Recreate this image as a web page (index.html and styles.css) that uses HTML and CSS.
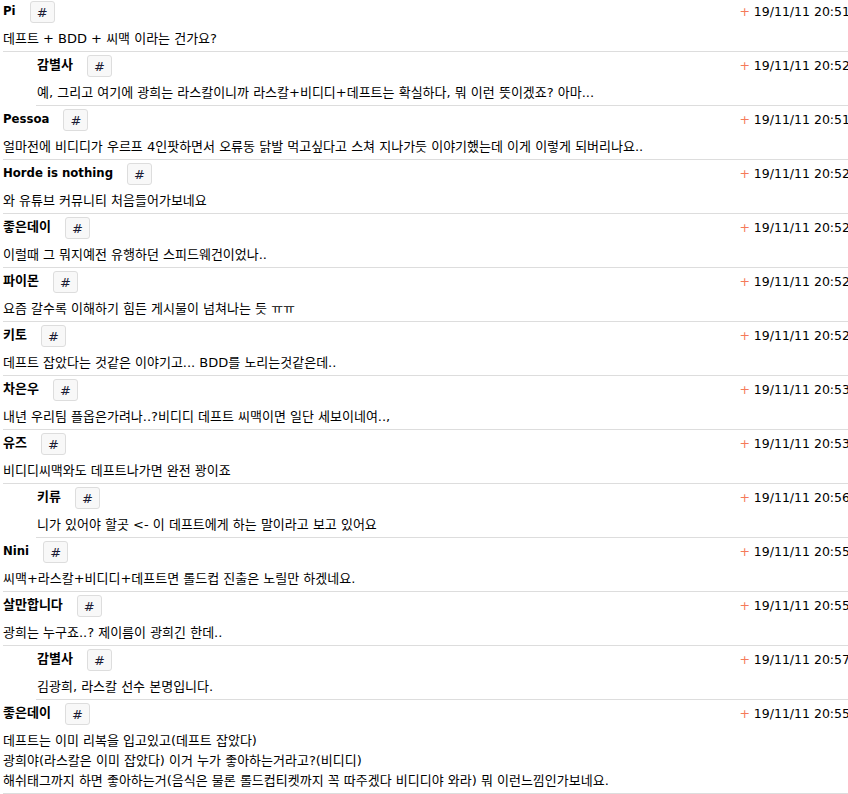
FILE: index.html
```html
<!DOCTYPE html>
<html lang="ko">
<head>
    <meta charset="UTF-8">
    <meta name="viewport" content="width=device-width, initial-scale=1.0">
    <title>댓글</title>
    <link rel="stylesheet" href="styles.css">
</head>
<body>
    <div class="comments">
        <div class="comment">
            <div class="head"><span class="name">Pi</span><button class="anchor">#</button><span class="date"><b>+</b> 19/11/11 20:51</span></div>
            <div class="text">데프트 + BDD + 씨맥 이라는 건가요?</div>
        </div>
        <div class="comment reply">
            <div class="head"><span class="name">감별사</span><button class="anchor">#</button><span class="date"><b>+</b> 19/11/11 20:52</span></div>
            <div class="text">예, 그리고 여기에 광희는 라스칼이니까 라스칼+비디디+데프트는 확실하다, 뭐 이런 뜻이겠죠? 아마...</div>
        </div>
        <div class="comment">
            <div class="head"><span class="name">Pessoa</span><button class="anchor">#</button><span class="date"><b>+</b> 19/11/11 20:51</span></div>
            <div class="text">얼마전에 비디디가 우르프 4인팟하면서 오류동 닭발 먹고싶다고 스쳐 지나가듯 이야기했는데 이게 이렇게 되버리나요..</div>
        </div>
        <div class="comment">
            <div class="head"><span class="name">Horde is nothing</span><button class="anchor">#</button><span class="date"><b>+</b> 19/11/11 20:52</span></div>
            <div class="text">와 유튜브 커뮤니티 처음들어가보네요</div>
        </div>
        <div class="comment">
            <div class="head"><span class="name">좋은데이</span><button class="anchor">#</button><span class="date"><b>+</b> 19/11/11 20:52</span></div>
            <div class="text">이럴때 그 뭐지예전 유행하던 스피드웨건이었나..</div>
        </div>
        <div class="comment">
            <div class="head"><span class="name">파이몬</span><button class="anchor">#</button><span class="date"><b>+</b> 19/11/11 20:52</span></div>
            <div class="text">요즘 갈수록 이해하기 힘든 게시물이 넘쳐나는 듯 ㅠㅠ</div>
        </div>
        <div class="comment">
            <div class="head"><span class="name">키토</span><button class="anchor">#</button><span class="date"><b>+</b> 19/11/11 20:52</span></div>
            <div class="text">데프트 잡았다는 것같은 이야기고... BDD를 노리는것같은데..</div>
        </div>
        <div class="comment">
            <div class="head"><span class="name">차은우</span><button class="anchor">#</button><span class="date"><b>+</b> 19/11/11 20:53</span></div>
            <div class="text">내년 우리팀 플옵은가려나..?비디디 데프트 씨맥이면 일단 세보이네여..,</div>
        </div>
        <div class="comment">
            <div class="head"><span class="name">유즈</span><button class="anchor">#</button><span class="date"><b>+</b> 19/11/11 20:53</span></div>
            <div class="text">비디디씨맥와도 데프트나가면 완전 꽝이죠</div>
        </div>
        <div class="comment reply">
            <div class="head"><span class="name">키류</span><button class="anchor">#</button><span class="date"><b>+</b> 19/11/11 20:56</span></div>
            <div class="text">니가 있어야 할곳 &lt;- 이 데프트에게 하는 말이라고 보고 있어요</div>
        </div>
        <div class="comment">
            <div class="head"><span class="name">Nini</span><button class="anchor">#</button><span class="date"><b>+</b> 19/11/11 20:55</span></div>
            <div class="text">씨맥+라스칼+비디디+데프트면 롤드컵 진출은 노릴만 하겠네요.</div>
        </div>
        <div class="comment">
            <div class="head"><span class="name">살만합니다</span><button class="anchor">#</button><span class="date"><b>+</b> 19/11/11 20:55</span></div>
            <div class="text">광희는 누구죠..? 제이름이 광희긴 한데..</div>
        </div>
        <div class="comment reply">
            <div class="head"><span class="name">감별사</span><button class="anchor">#</button><span class="date"><b>+</b> 19/11/11 20:57</span></div>
            <div class="text">김광희, 라스칼 선수 본명입니다.</div>
        </div>
        <div class="comment">
            <div class="head"><span class="name">좋은데이</span><button class="anchor">#</button><span class="date"><b>+</b> 19/11/11 20:55</span></div>
            <div class="text">데프트는 이미 리복을 입고있고(데프트 잡았다)<br>광희야(라스칼은 이미 잡았다) 이거 누가 좋아하는거라고?(비디디)<br>해쉬태그까지 하면 좋아하는거(음식은 물론 롤드컵티켓까지 꼭 따주겠다 비디디야 와라) 뭐 이런느낌인가보네요.</div>
        </div>
    </div>
</body>
</html>
```

FILE: styles.css
```css
body {
    margin: 0;
    overflow: hidden;
    font-family: "DejaVu Sans", Verdana, "Noto Sans CJK KR", sans-serif;
    font-size: 13px;
    color: #000;
    background: #fff;
}
.comments {
    width: 847px;
    margin: -2px 0 0 3px;
}
.comment {
    padding-top: 3px;
    border-bottom: 1px solid #ddd;
}
.comment.reply {
    margin-left: 33px;
    padding-left: 1px;
}
.head {
    display: flex;
    align-items: flex-start;
    height: 23px;
}
.name {
    font-family: "DejaVu Sans Condensed", "DejaVu Sans", "Noto Sans CJK KR", sans-serif;
    font-weight: bold;
    font-size: 13px;
    line-height: 19px;
}
.anchor {
    margin-left: 14px;
    width: 25px;
    height: 22px;
    padding: 0;
    border: 1px solid #ddd;
    border-radius: 3px;
    background: #f8f8f8;
    font-family: "DejaVu Sans", Verdana, sans-serif;
    font-size: 13px;
    color: #1a1a33;
}
.date {
    margin-left: auto;
    font-size: 12.5px;
    line-height: 22px;
    white-space: nowrap;
}
.date b {
    font-weight: normal;
    color: #f57a5a;
}
.text {
    margin-top: 5px;
    padding-bottom: 2px;
    line-height: 20px;
}
```
